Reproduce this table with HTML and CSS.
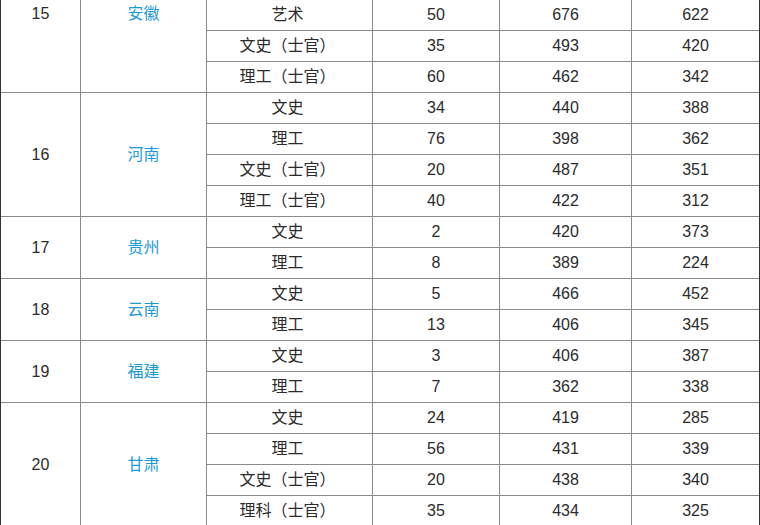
FILE: index.html
```html
<!DOCTYPE html>
<html lang="zh">
<head>
<meta charset="utf-8">
<link rel="stylesheet" href="styles.css">
</head>
<body>
<table class="score-table">
  <colgroup>
    <col class="c1"><col class="c2"><col class="c3"><col class="c4"><col class="c5"><col class="c6">
  </colgroup>
  <tbody>
    <tr><td rowspan="3" class="no cut">15</td><td rowspan="3" class="prov cut">安徽</td><td class="kind">艺术</td><td>50</td><td>676</td><td>622</td></tr>
    <tr><td class="kind">文史（士官）</td><td>35</td><td>493</td><td>420</td></tr>
    <tr><td class="kind">理工（士官）</td><td>60</td><td>462</td><td>342</td></tr>

    <tr><td rowspan="4" class="no">16</td><td rowspan="4" class="prov">河南</td><td class="kind">文史</td><td>34</td><td>440</td><td>388</td></tr>
    <tr><td class="kind">理工</td><td>76</td><td>398</td><td>362</td></tr>
    <tr><td class="kind">文史（士官）</td><td>20</td><td>487</td><td>351</td></tr>
    <tr><td class="kind">理工（士官）</td><td>40</td><td>422</td><td>312</td></tr>

    <tr><td rowspan="2" class="no">17</td><td rowspan="2" class="prov">贵州</td><td class="kind">文史</td><td>2</td><td>420</td><td>373</td></tr>
    <tr><td class="kind">理工</td><td>8</td><td>389</td><td>224</td></tr>

    <tr><td rowspan="2" class="no">18</td><td rowspan="2" class="prov">云南</td><td class="kind">文史</td><td>5</td><td>466</td><td>452</td></tr>
    <tr><td class="kind">理工</td><td>13</td><td>406</td><td>345</td></tr>

    <tr><td rowspan="2" class="no">19</td><td rowspan="2" class="prov">福建</td><td class="kind">文史</td><td>3</td><td>406</td><td>387</td></tr>
    <tr><td class="kind">理工</td><td>7</td><td>362</td><td>338</td></tr>

    <tr><td rowspan="4" class="no">20</td><td rowspan="4" class="prov">甘肃</td><td class="kind">文史</td><td>24</td><td>419</td><td>285</td></tr>
    <tr><td class="kind">理工</td><td>56</td><td>431</td><td>339</td></tr>
    <tr><td class="kind">文史（士官）</td><td>20</td><td>438</td><td>340</td></tr>
    <tr><td class="kind">理科（士官）</td><td>35</td><td>434</td><td>325</td></tr>
  </tbody>
</table>
</body>
</html>
```

FILE: styles.css
```css
html, body {
  margin: 0;
  padding: 0;
  background: #ffffff;
}

.score-table {
  width: 760px;
  table-layout: fixed;
  border-collapse: separate;
  border-spacing: 0;
  border-left: 1px solid #333333;
  border-right: 1px solid #333333;
  font-family: "Liberation Sans", "Noto Sans CJK SC", sans-serif;
  font-size: 16px;
  color: #2b2b2b;
  text-spacing-trim: space-all;
  font-feature-settings: "chws" 0, "halt" 0, "palt" 0;
}

.c1 { width: 80px; }
.c2 { width: 126px; }
.c3 { width: 166px; }
.c4 { width: 127px; }
.c5 { width: 132px; }
.c6 { width: 127px; }

.score-table td {
  box-sizing: border-box;
  height: 31px;
  padding: 0;
  line-height: 30px;
  text-align: center;
  vertical-align: middle;
  border-right: 1px solid #8a8a8a;
  border-bottom: 1px solid #8a8a8a;
  white-space: nowrap;
}

.score-table td:last-child {
  border-right: none;
}

.score-table td.cut {
  vertical-align: top;
  line-height: 28px;
}

.score-table .kind {
  padding-right: 4px;
}

.score-table .prov {
  color: #1c9ad6;
}
```
